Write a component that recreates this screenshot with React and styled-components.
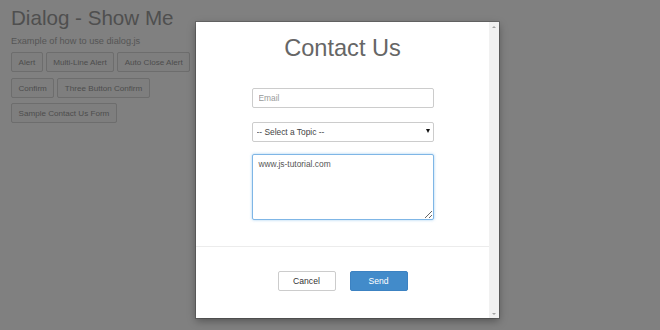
import React from 'react'
import styled, { createGlobalStyle } from 'styled-components'

const GlobalStyle = createGlobalStyle`
  html, body {
    margin: 0;
    padding: 0;
    height: 100%;
    background: #808080;
    font-family: "Liberation Sans", Arial, sans-serif;
  }
  #root { height: 100%; }
`

const Page = styled.div`
  position: relative;
  width: 660px;
  height: 330px;
  overflow: hidden;
  background: #808080;
  padding: 0 11px;
  box-sizing: border-box;
`

const PageTitle = styled.h1`
  margin: 0;
  padding-top: 5px;
  font-size: 20.6px;
  line-height: 25px;
  font-weight: 400;
  color: #4f4f4f;
`

const Lead = styled.p`
  margin: 6px 0 0;
  font-size: 9.2px;
  line-height: 11px;
  color: #555;
`

const ButtonRow = styled.div`
  display: flex;
  gap: 3px;
  margin-top: ${p => p.$top}px;
`

const PageButton = styled.button`
  height: 20px;
  padding: 0 6.5px;
  border: 1px solid #6d6d6d;
  border-radius: 2px;
  background: #7e7e7e;
  color: #4d4d4d;
  font-family: inherit;
  font-size: 8.1px;
`

const Modal = styled.div`
  position: absolute;
  left: 196px;
  top: 22px;
  width: 303px;
  height: 296px;
  display: flex;
  background: #fff;
  box-shadow: 0 0 0 1px rgba(0, 0, 0, 0.18), 0 3px 8px rgba(0, 0, 0, 0.35);
`

const ModalBody = styled.div`
  flex: 1;
  display: flex;
  flex-direction: column;
  align-items: center;
`

const ModalTitle = styled.h2`
  margin: 0;
  padding-top: 13px;
  font-size: 23.6px;
  line-height: 27px;
  font-weight: 400;
  color: #666;
`

const Form = styled.div`
  display: flex;
  flex-direction: column;
  width: 182px;
  margin-top: 26px;
`

const fieldBase = `
  box-sizing: border-box;
  width: 100%;
  border: 1px solid #ccc;
  border-radius: 2px;
  background: #fff;
  font-family: "Liberation Sans", Arial, sans-serif;
  font-size: 8.4px;
  color: #555;
  outline: none;
`

const Input = styled.input`
  ${fieldBase}
  height: 20px;
  padding: 0 6px;
  &::placeholder { color: #999; }
`

const SelectWrap = styled.div`
  position: relative;
  margin-top: 13px;
`

const Select = styled.select`
  ${fieldBase}
  height: 20px;
  padding: 0 4px;
  appearance: none;
  -webkit-appearance: none;
  color: #444;
`

const Arrow = styled.span`
  position: absolute;
  right: 4px;
  top: 8px;
  width: 0;
  height: 0;
  border-left: 2.5px solid transparent;
  border-right: 2.5px solid transparent;
  border-top: 4px solid #111;
  pointer-events: none;
`

const TextArea = styled.textarea`
  ${fieldBase}
  margin-top: 12px;
  height: 66px;
  padding: 4px 6px;
  resize: vertical;
  line-height: 11px;
  border-color: #7fb6e6;
  box-shadow: 0 0 3px rgba(102, 175, 233, 0.6);
`

const Divider = styled.hr`
  align-self: stretch;
  margin: 26px 0 0;
  border: 0;
  border-top: 1px solid #ececec;
`

const Footer = styled.div`
  display: flex;
  gap: 14px;
  margin-top: 24px;
`

const ActionButton = styled.button`
  width: 58px;
  height: 20px;
  border-radius: 2px;
  font-family: inherit;
  font-size: 8.6px;
  border: 1px solid ${p => (p.$primary ? '#3c82c2' : '#ccc')};
  background: ${p => (p.$primary ? '#428bca' : '#fff')};
  color: ${p => (p.$primary ? '#fff' : '#333')};
`

const Scrollbar = styled.div`
  width: 10px;
  background: #f1f1f1;
  display: flex;
  flex-direction: column;
  justify-content: space-between;
  align-items: center;
  padding: 4px 0 3px;
`

const ScrollArrow = styled.span`
  width: 0;
  height: 0;
  border-left: 2px solid transparent;
  border-right: 2px solid transparent;
  ${p => (p.$down ? 'border-top: 2px solid #a3a3a3;' : 'border-bottom: 2px solid #a3a3a3;')}
`

const App = () => {
  return (
    <>
      <GlobalStyle />
      <Page>
        <PageTitle>Dialog - Show Me</PageTitle>
        <Lead>Example of how to use dialog.js</Lead>
        <ButtonRow $top={5}>
          <PageButton>Alert</PageButton>
          <PageButton>Multi-Line Alert</PageButton>
          <PageButton>Auto Close Alert</PageButton>
        </ButtonRow>
        <ButtonRow $top={6}>
          <PageButton>Confirm</PageButton>
          <PageButton>Three Button Confirm</PageButton>
        </ButtonRow>
        <ButtonRow $top={5}>
          <PageButton>Sample Contact Us Form</PageButton>
        </ButtonRow>

        <Modal>
          <ModalBody>
            <ModalTitle>Contact Us</ModalTitle>
            <Form>
              <Input placeholder="Email" />
              <SelectWrap>
                <Select defaultValue="">
                  <option value="">-- Select a Topic --</option>
                </Select>
                <Arrow />
              </SelectWrap>
              <TextArea defaultValue="www.js-tutorial.com" spellCheck={false} />
            </Form>
            <Divider />
            <Footer>
              <ActionButton>Cancel</ActionButton>
              <ActionButton $primary>Send</ActionButton>
            </Footer>
          </ModalBody>
          <Scrollbar>
            <ScrollArrow />
            <ScrollArrow $down />
          </Scrollbar>
        </Modal>
      </Page>
    </>
  )
}

export default App
